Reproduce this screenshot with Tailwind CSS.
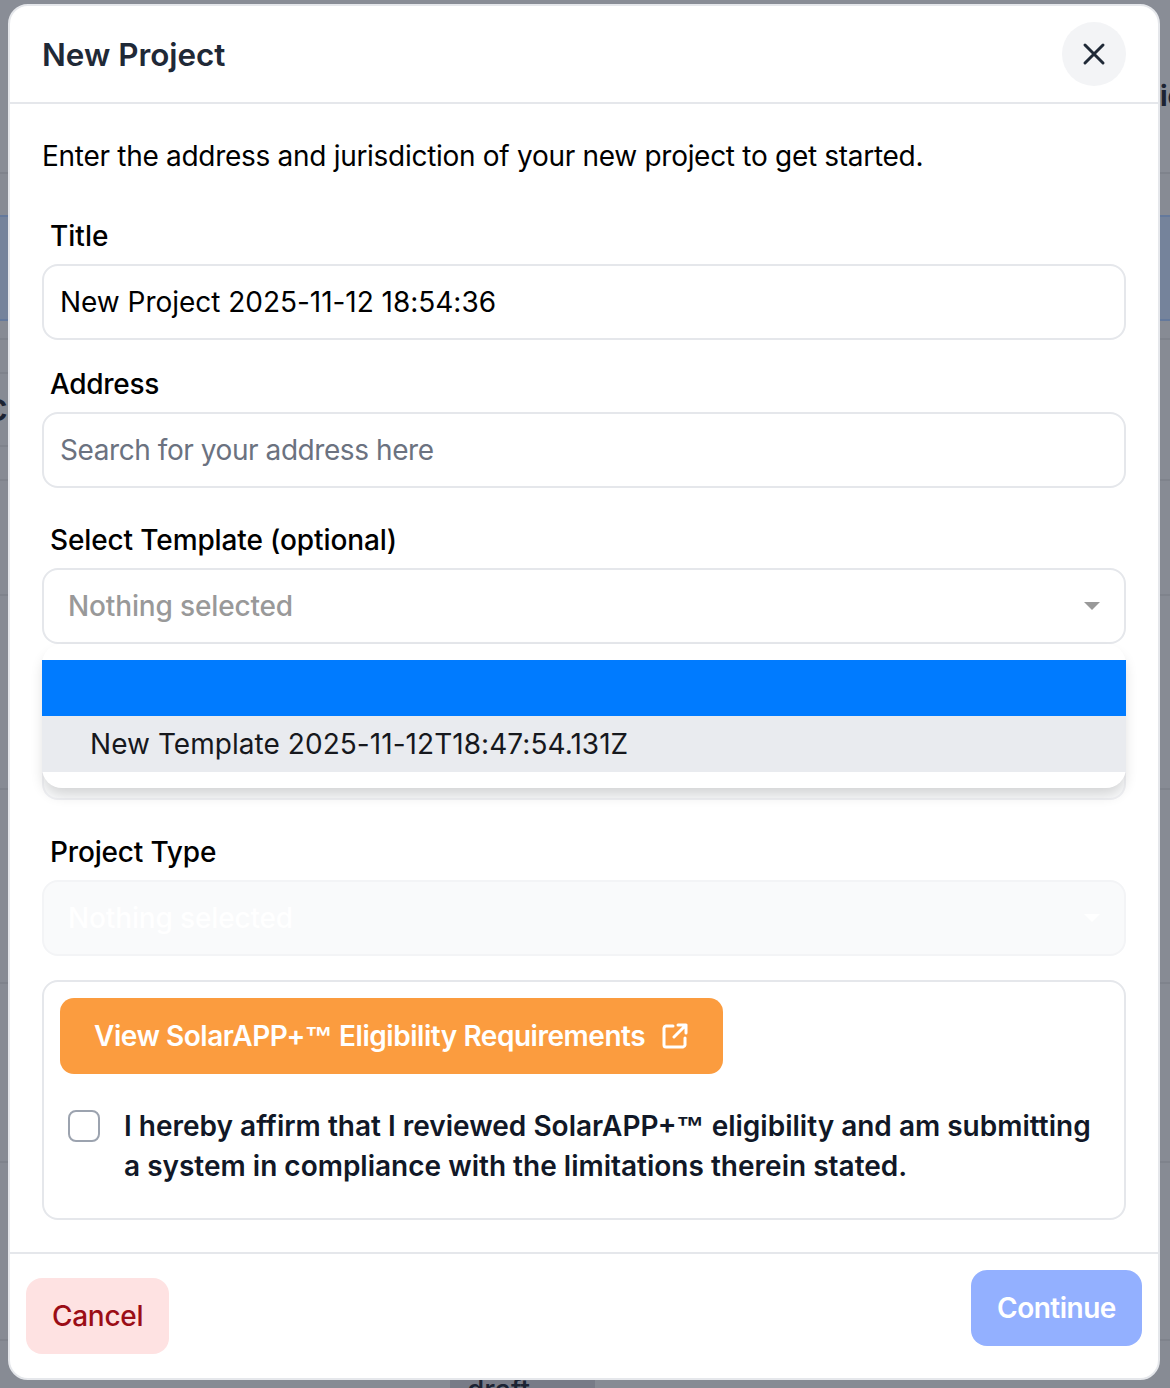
<!DOCTYPE html>
<html lang="en">
<head>
    <meta charset="UTF-8">
    <meta name="viewport" content="width=device-width, initial-scale=1.0">
    <title>New Project</title>
    <script src="https://cdn.jsdelivr.net/npm/@tailwindcss/browser@4"></script>
</head>
<body class="relative w-[1170px] h-[1388px] overflow-hidden bg-[#878b94] font-['Inter',sans-serif] text-[28px] leading-[40px]">

    <!-- page behind the scrim -->
    <div class="flex flex-col h-full text-[#1c2333] font-semibold">
        <div class="h-[174px] flex justify-end border-b-2 border-[#7f838c] bg-[#898d96]">
            <span class="mt-[76px] w-[10px] overflow-hidden font-bold">ic</span>
        </div>
        <div class="h-[41px]"></div>
        <div class="h-[106px] bg-[#75839b] border-y-2 border-[#64799c]"></div>
        <div class="h-[19px] border-b-2 border-[#7f838c]"></div>
        <div class="h-[141px] border-b-2 border-[#7f838c]">
            <div class="mt-[32px] w-[8px] h-[75px] pb-[6px] overflow-hidden border-y-2 border-[#7f838c] flex items-center justify-end text-[40px] font-medium">
                <span>c</span>
            </div>
        </div>
        <div class="h-[115px] border-b-2 border-[#7f838c]"></div>
        <div class="h-[194px] border-b-2 border-[#7f838c]"></div>
        <div class="h-[194px] border-b-2 border-[#7f838c]"></div>
        <div class="h-[179px] border-b-2 border-[#7f838c]"></div>
        <div class="h-[178px] border-b-2 border-[#7f838c]"></div>
        <div class="h-[47px] pl-[450px]">
            <div class="w-[145px] h-[47px] mt-[29px] bg-[#787b87] pl-[17px] text-[#1c2333] font-medium">draft</div>
        </div>
    </div>

    <!-- modal -->
    <div class="absolute left-[8px] top-[4px] w-[1152px] h-[1376px] flex flex-col bg-white border-2 border-[#e5e7eb] rounded-[20px]">
        <header class="h-[98px] shrink-0 flex items-center justify-between pl-[32px] pr-[32px] border-b-2 border-[#e5e7eb]">
            <h1 class="pt-[2px] text-[31.4px] font-semibold text-[#1f2937]">New Project</h1>
            <button class="w-[64px] h-[64px] rounded-full bg-[#f3f4f6] flex items-center justify-center text-[#1f2937]">
                <svg width="28" height="28" viewBox="0 0 28 28" fill="none" stroke="currentColor" stroke-width="3" stroke-linecap="round"><path d="M5 5l18 18M23 5L5 23"/></svg>
            </button>
        </header>

        <main class="flex-1 flex flex-col px-[32px] pt-[32px]">
            <p class="text-black tracking-[-0.29px]">Enter the address and jurisdiction of your new project to get started.</p>

            <label class="mt-[40px] mb-[8px] pl-[8px] font-medium text-black">Title</label>
            <div class="h-[76px] flex items-center pl-[16px] rounded-[16px] border-2 border-[#e5e7eb] text-black tracking-[-0.03px]">New Project 2025-11-12 18:54:36</div>

            <label class="mt-[24px] mb-[8px] pl-[8px] font-medium text-black tracking-[-0.3px]">Address</label>
            <div class="h-[76px] flex items-center pl-[16px] rounded-[16px] border-2 border-[#e5e7eb] text-[#6b7280] tracking-[-0.43px]">Search for your address here</div>

            <label class="mt-[32px] mb-[8px] pl-[8px] font-medium text-black tracking-[-0.12px]">Select Template (optional)</label>
            <div class="relative">
                <div class="h-[76px] flex items-center justify-between pl-[24px] pr-[24px] rounded-[16px] border-2 border-[#e5e7eb] font-medium text-[#999999] tracking-[-0.15px]">
                    <span>Nothing selected</span>
                    <svg width="16" height="8" viewBox="0 0 16 8"><path d="M0 0h16L8 8z" fill="#999999"/></svg>
                </div>
                <div class="absolute z-10 top-full left-0 right-0 py-[16px] bg-white rounded-[20px] shadow-[0_8px_14px_-2px_rgba(0,0,0,0.16)]">
                    <div class="h-[56px] bg-[#007bff]"></div>
                    <div class="h-[56px] flex items-center pl-[48px] bg-[#e9ebef] text-[#16181d] tracking-[0.05px]">New Template 2025-11-12T18:47:54.131Z</div>
                </div>
            </div>

            <!-- field hidden behind the open menu -->
            <div class="mt-[80px] h-[76px] rounded-[16px] border-2 border-[#f0f1f4] bg-[#f9fafb]"></div>

            <label class="mt-[32px] mb-[8px] pl-[8px] font-medium text-black tracking-[-0.17px]">Project Type</label>
            <div class="h-[76px] flex items-center justify-between pl-[24px] pr-[24px] rounded-[16px] border-2 border-[#f3f4f6] bg-[#f9fafb] font-medium text-white tracking-[-0.15px]">
                <span>Nothing selected</span>
                <svg width="16" height="8" viewBox="0 0 16 8"><path d="M0 0h16L8 8z" fill="#ffffff"/></svg>
            </div>

            <section class="mt-[24px] h-[240px] p-[16px] rounded-[16px] border-2 border-[#e5e7eb]">
                <a class="inline-flex items-center gap-[17px] h-[76px] pl-[34px] pr-[35px] rounded-[14px] bg-[#fb9c3f] font-semibold text-white tracking-[-0.47px]">
                    <span>View SolarAPP+<span class="font-['Liberation_Sans',sans-serif] leading-none">™</span> Eligibility Requirements</span>
                    <svg width="26" height="26" viewBox="0 0 26 26" fill="none" stroke="currentColor" stroke-width="3" stroke-linecap="round" stroke-linejoin="round"><path d="M11 3H4a2.500 2.500 0 0 0-2 2v17a2 2 0 0 0 2 2h17a2.500 2.500 0 0 0 2-2v-7"/><path d="M16 2h8v8M24 2L12 14"/></svg>
                </a>
                <div class="mt-[32px] flex items-start gap-[24px] pl-[8px]">
                    <span class="shrink-0 w-[32px] h-[32px] mt-[4px] rounded-[8px] border-2 border-[#9ca3af] bg-white"></span>
                    <p class="font-semibold text-[#111827]">I hereby affirm that I reviewed SolarAPP+<span class="font-['Liberation_Sans',sans-serif] leading-none">™</span> eligibility and am submitting a system in compliance with the limitations therein stated.</p>
                </div>
            </section>
        </main>

        <footer class="h-[126px] shrink-0 flex items-start justify-between px-[16px] pt-[16px] border-t-2 border-[#e5e7eb]">
            <button class="mt-[8px] h-[76px] px-[26px] rounded-[16px] bg-[#fee2e2] font-medium text-[#9b0d16] tracking-[-0.3px]">Cancel</button>
            <button class="h-[76px] w-[171px] rounded-[16px] bg-[#93b0ff] font-semibold text-white tracking-[-0.5px]">Continue</button>
        </footer>
    </div>

</body>
</html>
